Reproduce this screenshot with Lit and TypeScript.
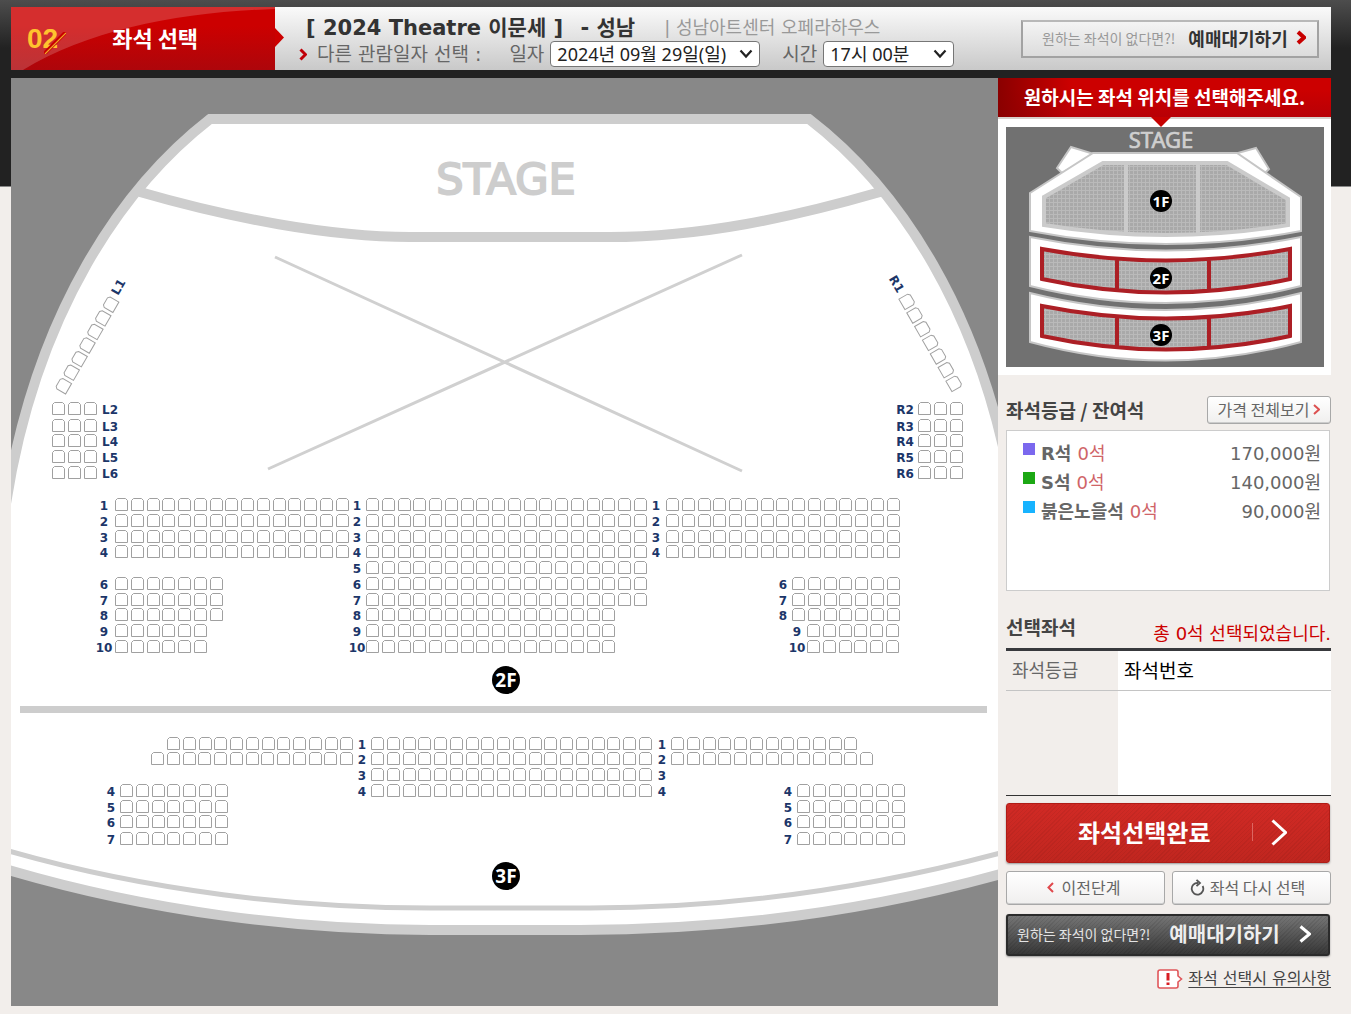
import { LitElement, html, svg, css } from "lit";
import { customElement } from "lit/decorators.js";

interface SeatRow {
  x: number;
  y: number;
  count: number;
}

interface RowLabel {
  x: number;
  y: number;
  text: string;
}

interface Grade {
  name: string;
  left: number;
  price: string;
  color: string;
}

const PITCH = 15.75;
const SEAT = "M.5 12.5V2.5L2.5.5H10.5L12.5 2.5V12.5Z";

/* Top edge of each seat row on the second floor, row 1 to row 10. */
const FLOOR2 = [498, 514, 530, 545, 561, 577, 593, 608, 624, 640];
/* Third floor, row 1 to row 7. */
const FLOOR3 = [737, 752, 768, 784, 800, 815, 832];
const SIDE = [402, 419, 434, 450, 466];

function block(rows: number[], x: number, counts: number[]): SeatRow[] {
  return rows.map((y, i) => ({ x, y, count: counts[i] }));
}

function labels(rows: number[], x: number, first: number): RowLabel[] {
  return rows.map((y, i) => ({ x, y: y + 12, text: String(first + i) }));
}

const SEAT_ROWS: SeatRow[] = [
  ...block(SIDE, 52, [3, 3, 3, 3, 3]),
  ...block(SIDE, 918, [3, 3, 3, 3, 3]),
  ...block(FLOOR2.slice(0, 4), 115, [15, 15, 15, 15]),
  ...block(FLOOR2.slice(5), 115, [7, 7, 7, 6, 6]),
  ...block(FLOOR2, 366, [18, 18, 18, 18, 18, 18, 18, 16, 16, 16]),
  ...block(FLOOR2.slice(0, 4), 666, [15, 15, 15, 15]),
  ...block(FLOOR2.slice(5, 8), 792, [7, 7, 7]),
  ...block(FLOOR2.slice(8), 807, [6, 6]),
  { x: 167, y: FLOOR3[0], count: 12 },
  { x: 151, y: FLOOR3[1], count: 13 },
  ...block(FLOOR3.slice(0, 4), 371, [18, 18, 18, 18]),
  { x: 671, y: FLOOR3[0], count: 12 },
  { x: 671, y: FLOOR3[1], count: 13 },
  ...block(FLOOR3.slice(3), 120, [7, 7, 7, 7]),
  ...block(FLOOR3.slice(3), 797, [7, 7, 7, 7]),
];

const ROW_LABELS: RowLabel[] = [
  ...SIDE.map((y, i) => ({ x: 110, y: y + 12, text: `L${i + 2}` })),
  ...SIDE.map((y, i) => ({ x: 905, y: y + 12, text: `R${i + 2}` })),
  ...labels(FLOOR2.slice(0, 4), 104, 1),
  ...labels(FLOOR2.slice(5), 104, 6),
  ...labels(FLOOR2, 357, 1),
  ...labels(FLOOR2.slice(0, 4), 656, 1),
  ...labels(FLOOR2.slice(5, 8), 783, 6),
  ...labels(FLOOR2.slice(8), 797, 9),
  ...labels(FLOOR3.slice(0, 4), 362, 1),
  ...labels(FLOOR3.slice(0, 4), 662, 1),
  ...labels(FLOOR3.slice(3), 111, 4),
  ...labels(FLOOR3.slice(3), 788, 4),
];

const GRADES: Grade[] = [
  { name: "R석", left: 0, price: "170,000원", color: "#7b68ee" },
  { name: "S석", left: 0, price: "140,000원", color: "#1ca814" },
  { name: "붉은노을석", left: 0, price: "90,000원", color: "#17b3ff" },
];

@customElement("seat-map")
class SeatMap extends LitElement {
  static styles = css`
    :host {
      display: block;
      background: #888;
    }
    .map {
      display: block;
      width: 100%;
    }
    .band {
      fill: none;
      stroke: #cdcdcd;
      stroke-width: 10;
    }
    .house {
      fill: #fff;
      stroke: #cdcdcd;
      stroke-width: 10;
    }
    .thin {
      fill: none;
      stroke: #cdcdcd;
      stroke-width: 5;
    }
    .cross {
      stroke: #d0d0d0;
      stroke-width: 3;
    }
    .seat {
      fill: #fff;
      stroke: #a0a0a0;
      stroke-width: 1;
    }
    .stage {
      font: 43px/1 "DejaVu Sans", sans-serif;
      fill: #cdcdcd;
      stroke: #cdcdcd;
      stroke-width: 2;
      text-anchor: middle;
    }
    .row {
      font: bold 12px/1 "DejaVu Sans", sans-serif;
      fill: #1c3669;
      text-anchor: middle;
    }
    .floor {
      font: bold 19px/1 "Noto Sans", sans-serif;
      fill: #fff;
      text-anchor: middle;
    }
  `;

  private seats(row: SeatRow) {
    return Array.from({ length: row.count }, (_, i) => {
      const x = Math.round(row.x + i * PITCH);
      return svg`<path class="seat" d=${SEAT} transform="translate(${x} ${row.y})"/>`;
    });
  }

  private slanted(x0: number, y0: number, x1: number, y1: number, angle: number) {
    return Array.from({ length: 7 }, (_, i) => {
      const x = x0 + ((x1 - x0) * i) / 6;
      const y = y0 + ((y1 - y0) * i) / 6;
      return svg`<path class="seat" d=${SEAT}
        transform="translate(${x} ${y}) rotate(${angle}) translate(-6 -6)"/>`;
    });
  }

  render() {
    return html`
      <svg class="map" viewBox="11 78 987 928" role="img" aria-label="좌석 배치도">
        <path
          class="house"
          d="M210 119H809C895 185 985 310 1015 510V870C870 912 720 930 580 930H430C300 930 150 912 5 869V510C35 310 125 185 210 119Z"
        />
        <path class="band" d="M140 192C230 218 330 237 410 237H610C700 237 790 218 880 192" />
        <path class="thin" d="M5 850C150 892 300 908 430 908H590C730 908 870 888 1004 852" />
        <path class="cross" d="M275 257L742 471M268 469L742 255" />
        <rect x="20" y="706" width="967" height="7" fill="#cdcdcd" />
        <text class="stage" x="506" y="194">STAGE</text>
        ${SEAT_ROWS.map((r) => this.seats(r))}
        ${this.slanted(62.7, 386, 110, 304.5, -60)}
        ${this.slanted(907.3, 300.7, 954.3, 382.7, 60)}
        ${ROW_LABELS.map((l) => svg`<text class="row" x=${l.x} y=${l.y}>${l.text}</text>`)}
        <text class="row" transform="translate(122 289) rotate(-60)">L1</text>
        <text class="row" transform="translate(893 286) rotate(60)">R1</text>
        <circle cx="506" cy="680" r="14" />
        <text class="floor" x="506" y="687">2F</text>
        <circle cx="506" cy="876" r="14" />
        <text class="floor" x="506" y="883">3F</text>
      </svg>
    `;
  }
}

@customElement("mini-map")
class MiniMap extends LitElement {
  static styles = css`
    :host {
      display: block;
      background: #717171;
    }
    .map {
      display: block;
      width: 100%;
    }
    .slab {
      fill: #fff;
      stroke: #c6c6c6;
      stroke-width: 2;
    }
    .closed {
      fill: url(#dots);
      stroke: #cbcbcb;
      stroke-width: 4;
    }
    .open {
      fill: url(#dots);
      stroke: #ac1f25;
      stroke-width: 4;
    }
    .stage {
      font: 22px/1 "Noto Sans", sans-serif;
      fill: #cfcfcf;
      stroke: #cfcfcf;
      stroke-width: 0.7;
      text-anchor: middle;
    }
    .floor {
      font: bold 15px/1 "Noto Sans", sans-serif;
      fill: #fff;
      text-anchor: middle;
    }
  `;

  private badge(y: number, text: string) {
    return svg`<circle cx="155" cy=${y} r="11"/><text class="floor" x="155" y=${y + 6}>${text}</text>`;
  }

  render() {
    return html`
      <svg class="map" viewBox="0 0 318 240" role="img" aria-label="층별 위치">
        <defs>
          <pattern id="dots" width="4" height="4" patternUnits="userSpaceOnUse">
            <rect width="4" height="4" fill="#bababa" />
            <rect width="3" height="3" fill="#a9a9a9" />
          </pattern>
        </defs>
        <text class="stage" x="155" y="21">STAGE</text>
        <path class="slab" d="M65 20L88 27L56 46L51 41Z" />
        <path class="slab" d="M250 21L263 42L259 46L228 27Z" />
        <path class="slab" d="M24 66L87 26H231L295 70V104Q160 130 24 104Z" />
        <path class="closed" d="M38 70L97 36H221L282 72V98Q160 118 38 98ZM120 36V106M192 36V106" />
        <path class="slab" d="M24 110Q160 137 295 110V159Q160 193 24 159Z" />
        <path class="open" d="M36 122Q160 145 284 122V152Q160 179 36 152ZM111 132V164M203 132V164" />
        <path class="slab" d="M24 166Q160 200 295 166V215Q160 252 24 215Z" />
        <path class="open" d="M36 179Q160 204 284 179V209Q160 236 36 209ZM111 190V221M203 190V221" />
        ${this.badge(74, "1F")} ${this.badge(151, "2F")} ${this.badge(208, "3F")}
      </svg>
    `;
  }
}

@customElement("app-root")
class AppRoot extends LitElement {
  static styles = css`
    :host {
      display: block;
      box-sizing: border-box;
      min-height: 100vh;
      padding: 7px 20px 8px 11px;
      background: linear-gradient(#4d4d4d, #222 48px, #222 186px, #888 186px, #888 187px, #f2eeeb 187px);
      font: 18px/26px "DejaVu Sans", "Noto Sans CJK KR", sans-serif;
      color: #666;
    }
    button,
    select {
      box-sizing: border-box;
      margin: 0;
      font-family: "Noto Sans CJK KR", sans-serif;
      cursor: pointer;
    }
    svg {
      display: block;
      flex: none;
    }

    .header {
      display: flex;
      height: 63px;
      margin-bottom: 8px;
      background: linear-gradient(#fafafa, #c9c9c9);
    }
    .step {
      position: relative;
      flex: none;
      display: flex;
      align-items: center;
      width: 264px;
      background: linear-gradient(#cc0000 30%, #ad060b);
      color: #fff;
    }
    .gloss {
      position: absolute;
      inset: 0;
    }
    .pointer {
      position: absolute;
      left: 100%;
      top: 21px;
    }
    .number {
      position: relative;
      margin-left: 16px;
      font: bold 28px/32px "Liberation Sans", sans-serif;
      color: #ffc42e;
    }
    .slash {
      position: relative;
      margin: 8px 0 0 -14px;
    }
    .step-name {
      position: relative;
      margin-left: 46px;
      padding-bottom: 4px;
      font: bold 22px/32px "Noto Sans CJK KR", sans-serif;
    }
    .info {
      flex: 1;
      padding: 8px 0 0 24px;
      white-space: nowrap;
    }
    .title-row,
    .date-row {
      display: flex;
      align-items: center;
      height: 26px;
    }
    .title {
      margin: 0 0 0 7px;
      font-size: 21px;
      line-height: 26px;
      color: #333;
    }
    .city {
      margin-left: 10px;
    }
    .venue {
      margin-left: 29px;
      color: #999;
    }
    .date-row {
      font-size: 19px;
    }
    .date-row svg {
      margin-right: 10px;
    }
    .date-title {
      margin-right: 6px;
    }
    .picker {
      position: relative;
      display: flex;
      align-items: center;
      gap: 6px;
      margin-left: 22px;
    }
    .picker select {
      appearance: none;
      width: 210px;
      height: 26px;
      padding: 0 24px 0 6px;
      border: 1px solid #767676;
      border-radius: 4px;
      background: #fff;
      font-size: 18px;
      font-family: "Noto Sans", "Noto Sans CJK KR", sans-serif;
      color: #222;
    }
    .picker .time {
      width: 131px;
    }
    .picker svg {
      position: absolute;
      right: 7px;
      margin: 0;
      pointer-events: none;
    }
    .wait-top {
      align-self: center;
      display: flex;
      align-items: center;
      width: 298px;
      height: 38px;
      margin-right: 12px;
      padding: 0 11px 2px 19px;
      border: 2px solid #a2a2a2;
      border-top-color: #b8b8b8;
      background: linear-gradient(#f4f4f4, #dcdcdc);
      font-size: 14px;
      color: #999;
      white-space: nowrap;
    }
    .wait-top strong {
      margin: 0 auto 0 13px;
      font-size: 18px;
      line-height: 24px;
      color: #333;
    }

    .main {
      display: grid;
      grid-template-columns: minmax(0, 1fr) 333px;
      align-items: start;
    }
    .banner {
      position: relative;
      margin: 0;
      padding: 6px 0 7px;
      background: linear-gradient(90deg, #8a0000, rgba(138, 0, 0, 0) 22%), linear-gradient(#cc0000 30%, #b80006);
      font: bold 19px/26px "Noto Sans CJK KR", sans-serif;
      color: #fff;
      text-align: center;
    }
    .banner svg {
      position: absolute;
      top: 100%;
      left: 152px;
    }
    .overview {
      padding: 8px 7px 8px 8px;
      border-top: 2px solid #d8d0cb;
      background: #fff;
    }
    .panel {
      padding-left: 8px;
    }
    .panel-head {
      display: flex;
      align-items: center;
      justify-content: space-between;
      margin-top: 21px;
      height: 28px;
    }
    .panel-head h2 {
      margin: 0;
      font: bold 19px/28px "Noto Sans CJK KR", sans-serif;
      color: #444;
    }
    .light {
      display: flex;
      align-items: center;
      justify-content: center;
      padding: 0 0 2px;
      border: 1px solid #a8a8a8;
      border-radius: 3px;
      background: linear-gradient(#fff, #f0efee);
      box-shadow: inset 0 -1px #ccc;
      font-size: 16px;
      line-height: 24px;
      color: #666;
      white-space: nowrap;
    }
    .all-prices {
      gap: 4px;
      width: 124px;
      height: 28px;
    }
    .grades {
      box-sizing: border-box;
      min-height: 161px;
      margin: 6px 1px 0 0;
      padding: 8px 8px 8px 16px;
      border: 1px solid #ccc;
      background: #fff;
      list-style: none;
    }
    .grade {
      display: flex;
      align-items: center;
      height: 29px;
    }
    .swatch {
      width: 12px;
      height: 12px;
      margin: 0 6px 9px 0;
    }
    .left {
      margin-left: 6px;
      color: #cf6468;
    }
    .price {
      margin-left: auto;
    }
    .panel-head.chosen {
      margin-top: 22px;
      height: 35px;
      align-items: flex-start;
    }
    .total {
      margin: 0;
      padding-top: 8px;
      color: #c00;
    }
    .picked {
      width: 100%;
      border-collapse: collapse;
      border-top: 3px solid #38393d;
      border-bottom: 1px solid #333;
      table-layout: fixed;
      text-align: left;
    }
    .picked th {
      height: 39px;
      padding: 0 6px;
      border-bottom: 1px solid #c4c4c4;
      font-weight: normal;
    }
    .picked td {
      height: 104px;
      padding: 0;
    }
    .picked .kind {
      width: 100px;
    }
    .picked .seat-number {
      background: #fff;
      font-size: 19px;
      color: #000;
    }
    .picked .blank {
      background: #fff;
    }
    .actions {
      display: grid;
      grid-template-columns: 1fr 1fr;
      gap: 8px 7px;
      margin-top: 7px;
    }
    .done,
    .wait {
      grid-column: 1 / -1;
      display: flex;
      align-items: center;
      margin-right: 1px;
      border-radius: 3px;
      color: #fff;
      white-space: nowrap;
    }
    .done {
      height: 60px;
      padding: 0 42px 2px 71px;
      border: 1px solid #b01c16;
      background:
        repeating-linear-gradient(135deg, rgba(0, 0, 0, 0.05) 0 1px, transparent 1px 3px),
        linear-gradient(#d12a25, #c0261f);
      box-shadow: 0 1px 2px #999;
      font-size: 24px;
      font-weight: bold;
      line-height: 32px;
    }
    .done svg:first-of-type {
      margin-left: auto;
    }
    .done svg:last-of-type {
      margin-left: 18px;
    }
    .back,
    .again {
      height: 34px;
    }
    .back {
      gap: 8px;
      padding-right: 4px;
    }
    .again {
      gap: 5px;
      padding-right: 8px;
    }
    .wait {
      height: 42px;
      margin-top: 1px;
      padding: 0 17px 2px 9px;
      border: 2px solid #2b2b2b;
      background:
        repeating-linear-gradient(135deg, rgba(0, 0, 0, 0.08) 0 1px, transparent 1px 3px),
        linear-gradient(#757575, #383838);
      box-shadow: 0 1px 2px #999;
      font-size: 14px;
      color: #e4e4e4;
    }
    .wait strong {
      margin: 0 auto 0 19px;
      font-size: 20px;
      line-height: 28px;
      color: #eee;
    }
    .notice {
      display: flex;
      align-items: center;
      justify-content: flex-end;
      gap: 5px;
      margin-top: 10px;
      font-size: 16px;
    }
    .notice a {
      color: #444;
      text-underline-offset: 3px;
      white-space: nowrap;
    }
  `;

  private chevron(width: number, height: number, stroke: string, weight: number) {
    const inset = weight / 2;
    const d = `M${inset} ${inset}L${width - inset} ${height / 2}L${inset} ${height - inset}`;
    return html`<svg width=${width} height=${height} viewBox="0 0 ${width} ${height}" aria-hidden="true">
      <path d=${d} fill="none" stroke=${stroke} stroke-width=${weight} />
    </svg>`;
  }

  private arrowDown() {
    return html`<svg width="14" height="10" viewBox="0 0 14 10" aria-hidden="true">
      <path d="M1.5 1.5L7 7.5L12.5 1.5" fill="none" stroke="#222" stroke-width="2.2" />
    </svg>`;
  }

  render() {
    return html`
      <header class="header">
        <div class="step">
          <svg class="gloss" width="264" height="63" viewBox="0 0 264 63" aria-hidden="true">
            <path d="M0 0H264V2C170 5 80 22 12 63H0Z" fill="#fff" opacity="0.18" />
          </svg>
          <span class="number">02</span>
          <svg class="slash" width="22" height="22" viewBox="0 0 22 22" aria-hidden="true">
            <path d="M0 22L22 0" stroke="#c80000" stroke-width="4" />
            <path d="M1 22L22 1" stroke="#f0a828" stroke-width="1.2" />
          </svg>
          <span class="step-name">좌석 선택</span>
          <svg class="pointer" width="10" height="19" viewBox="0 0 10 19" aria-hidden="true">
            <path d="M0 0L9 9.5L0 19Z" fill="#c00" />
          </svg>
        </div>
        <div class="info">
          <div class="title-row">
            <h1 class="title">[ 2024 Theatre 이문세 ] <span class="city">- 성남</span></h1>
            <span class="venue">| 성남아트센터 오페라하우스</span>
          </div>
          <div class="date-row">
            ${this.chevron(8, 13, "#c00008", 3)}
            <span class="date-title">다른 관람일자 선택 :</span>
            <label class="picker">
              일자
              <select>
                <option>2024년 09월 29일(일)</option>
              </select>
              ${this.arrowDown()}
            </label>
            <label class="picker">
              시간
              <select class="time">
                <option>17시 00분</option>
              </select>
              ${this.arrowDown()}
            </label>
          </div>
        </div>
        <button class="wait-top" type="button">
          <span>원하는 좌석이 없다면?!</span>
          <strong>예매대기하기</strong>
          ${this.chevron(10, 15, "#c80000", 4)}
        </button>
      </header>

      <main class="main">
        <seat-map></seat-map>
        <aside>
          <p class="banner">
            원하시는 좌석 위치를 선택해주세요.
            <svg width="22" height="10" viewBox="0 0 22 10" aria-hidden="true">
              <path d="M1 0H21L11 10Z" fill="#c60000" />
            </svg>
          </p>
          <div class="overview"><mini-map></mini-map></div>
          <div class="panel">
            <div class="panel-head">
              <h2>좌석등급 / 잔여석</h2>
              <button class="light all-prices" type="button">
                가격 전체보기 ${this.chevron(7, 11, "#dc5050", 2)}
              </button>
            </div>
            <ul class="grades">
              ${GRADES.map(
                (g) => html`<li class="grade">
                  <span class="swatch" style="background:${g.color}"></span>
                  <strong>${g.name}</strong>
                  <span class="left">${g.left}석</span>
                  <span class="price">${g.price}</span>
                </li>`
              )}
            </ul>
            <div class="panel-head chosen">
              <h2>선택좌석</h2>
              <p class="total">총 0석 선택되었습니다.</p>
            </div>
            <table class="picked">
              <thead>
                <tr>
                  <th class="kind" scope="col">좌석등급</th>
                  <th class="seat-number" scope="col">좌석번호</th>
                </tr>
              </thead>
              <tbody>
                <tr>
                  <td></td>
                  <td class="blank"></td>
                </tr>
              </tbody>
            </table>
            <div class="actions">
              <button class="done" type="button">
                좌석선택완료
                <svg width="1" height="18" aria-hidden="true"><rect width="1" height="18" fill="#dc6661" /></svg>
                ${this.chevron(16, 27, "#fff", 3)}
              </button>
              <button class="light back" type="button">
                <svg width="7" height="11" viewBox="0 0 7 11" aria-hidden="true">
                  <path d="M6 1L1.5 5.5L6 10" fill="none" stroke="#e0484c" stroke-width="2" />
                </svg>
                이전단계
              </button>
              <button class="light again" type="button">
                <svg width="15" height="17" viewBox="0 0 15 17" aria-hidden="true">
                  <path d="M8 4A5.8 5.8 0 1 0 12.6 7" fill="none" stroke="#555" stroke-width="1.8" />
                  <path d="M6.5 .8L10 4L6.5 7.2" fill="none" stroke="#555" stroke-width="1.8" />
                </svg>
                좌석 다시 선택
              </button>
              <button class="wait" type="button">
                <span>원하는 좌석이 없다면?!</span>
                <strong>예매대기하기</strong>
                ${this.chevron(12, 18, "#fff", 3)}
              </button>
            </div>
            <div class="notice">
              <svg width="26" height="20" viewBox="0 0 26 20" aria-hidden="true">
                <path
                  d="M3 1H19Q21 1 21 3V7L24.5 10L21 13V17Q21 19 19 19H3Q1 19 1 17V3Q1 1 3 1Z"
                  fill="#fff"
                  stroke="#e0565a"
                  stroke-width="1.6"
                />
                <path d="M11 4V11.5M11 13.5V16" stroke="#d81e24" stroke-width="3" />
              </svg>
              <a href="#notice">좌석 선택시 유의사항</a>
            </div>
          </div>
        </aside>
      </main>
    `;
  }
}
